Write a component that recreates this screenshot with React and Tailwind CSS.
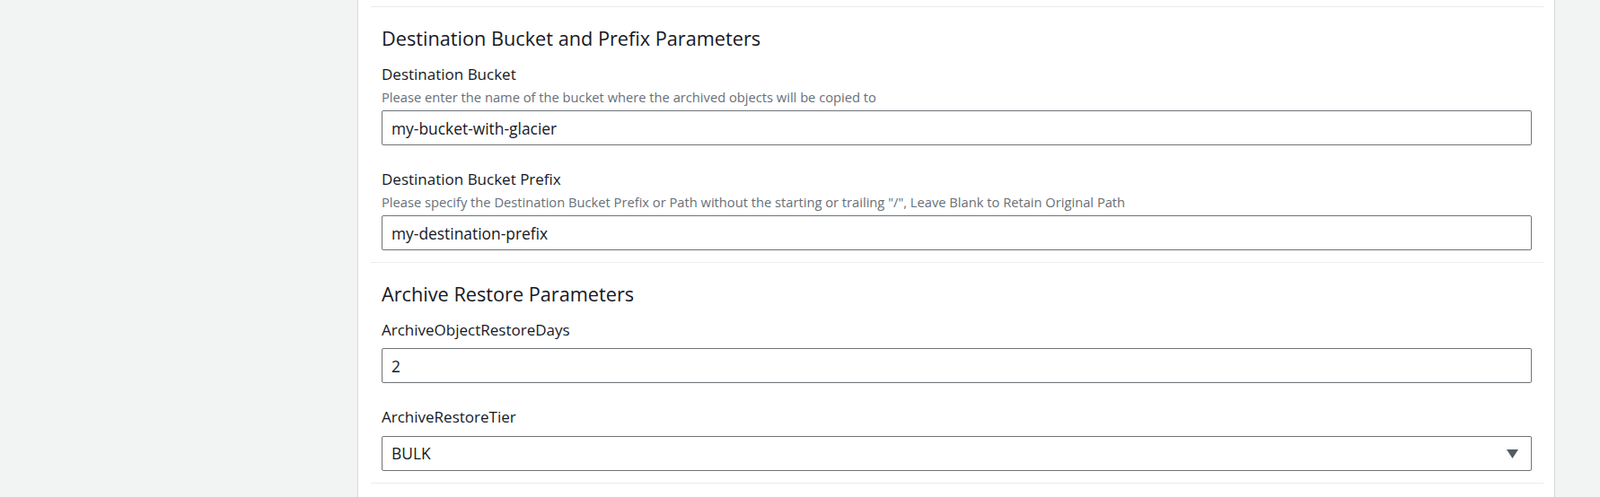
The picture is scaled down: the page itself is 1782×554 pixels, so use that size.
import { useState } from "react";

const font = { fontFamily: '"Open Sans", "Noto Sans", sans-serif' };

const Field = ({ label, description, value, onChange, first }) => (
  <div className={first ? "mt-[15px]" : "mt-[27px]"}>
    <div className="text-[17px] leading-[22px] text-[#16191f]">{label}</div>
    {description && (
      <div className="mt-[6px] text-[14.7px] leading-[16px] text-[#687078]">{description}</div>
    )}
    <input
      value={value}
      onChange={(e) => onChange(e.target.value)}
      className={`${description ? "mt-[7px]" : "mt-[9px]"} block h-[39px] w-full rounded-[2px] border border-[#6f7378] bg-white px-[10px] text-[17.4px] text-[#16191f] outline-none`}
      style={font}
    />
  </div>
);

const SelectField = ({ label, value, options, onChange }) => (
  <div className="mt-[27px]">
    <div className="text-[17px] leading-[22px] text-[#16191f]">{label}</div>
    <div className="relative mt-[10px]">
      <select
        value={value}
        onChange={(e) => onChange(e.target.value)}
        className="block h-[39px] w-full appearance-none rounded-[2px] border border-[#6f7378] bg-white px-[10px] text-[17.4px] text-[#16191f] outline-none"
        style={font}
      >
        {options.map((o) => (
          <option key={o}>{o}</option>
        ))}
      </select>
      {/* caret */}
      <svg
        className="pointer-events-none absolute right-[15px] top-[15px]"
        width="13"
        height="10"
        viewBox="0 0 13 10"
      >
        <path d="M0 0 H13 L6.5 10 Z" fill="#545b64" />
      </svg>
    </div>
  </div>
);

const Section = ({ title, children }) => (
  <div className="border-t border-[#eaeded] pt-[21px] pb-[13px] pl-[12px] pr-[13px]">
    <h2 className="text-[21.7px] leading-[28px] font-normal text-[#16191f]">{title}</h2>
    {children}
  </div>
);

export default function App() {
  const [bucket, setBucket] = useState("my-bucket-with-glacier");
  const [prefix, setPrefix] = useState("my-destination-prefix");
  const [days, setDays] = useState("2");
  const [tier, setTier] = useState("BULK");

  return (
    <div className="flex h-[554px] w-full overflow-hidden bg-[#f2f3f3]" style={font}>
      <div className="w-[398px] shrink-0" />
      <div className="w-[1334px] shrink-0 border-x border-[#d5dbdb] bg-white pl-[14px] pr-[12px]">
        <div className="h-[7px]" />
        <Section title="Destination Bucket and Prefix Parameters">
          <Field
            first
            label="Destination Bucket"
            description="Please enter the name of the bucket where the archived objects will be copied to"
            value={bucket}
            onChange={setBucket}
          />
          <Field
            label="Destination Bucket Prefix"
            description={'Please specify the Destination Bucket Prefix or Path without the starting or trailing "/", Leave Blank to Retain Original Path'}
            value={prefix}
            onChange={setPrefix}
          />
        </Section>
        <Section title="Archive Restore Parameters">
          <Field first label="ArchiveObjectRestoreDays" value={days} onChange={setDays} />
          <SelectField
            label="ArchiveRestoreTier"
            value={tier}
            options={["BULK", "STANDARD", "EXPEDITED"]}
            onChange={setTier}
          />
        </Section>
        <div className="border-t border-[#eaeded]" />
      </div>
    </div>
  );
}
